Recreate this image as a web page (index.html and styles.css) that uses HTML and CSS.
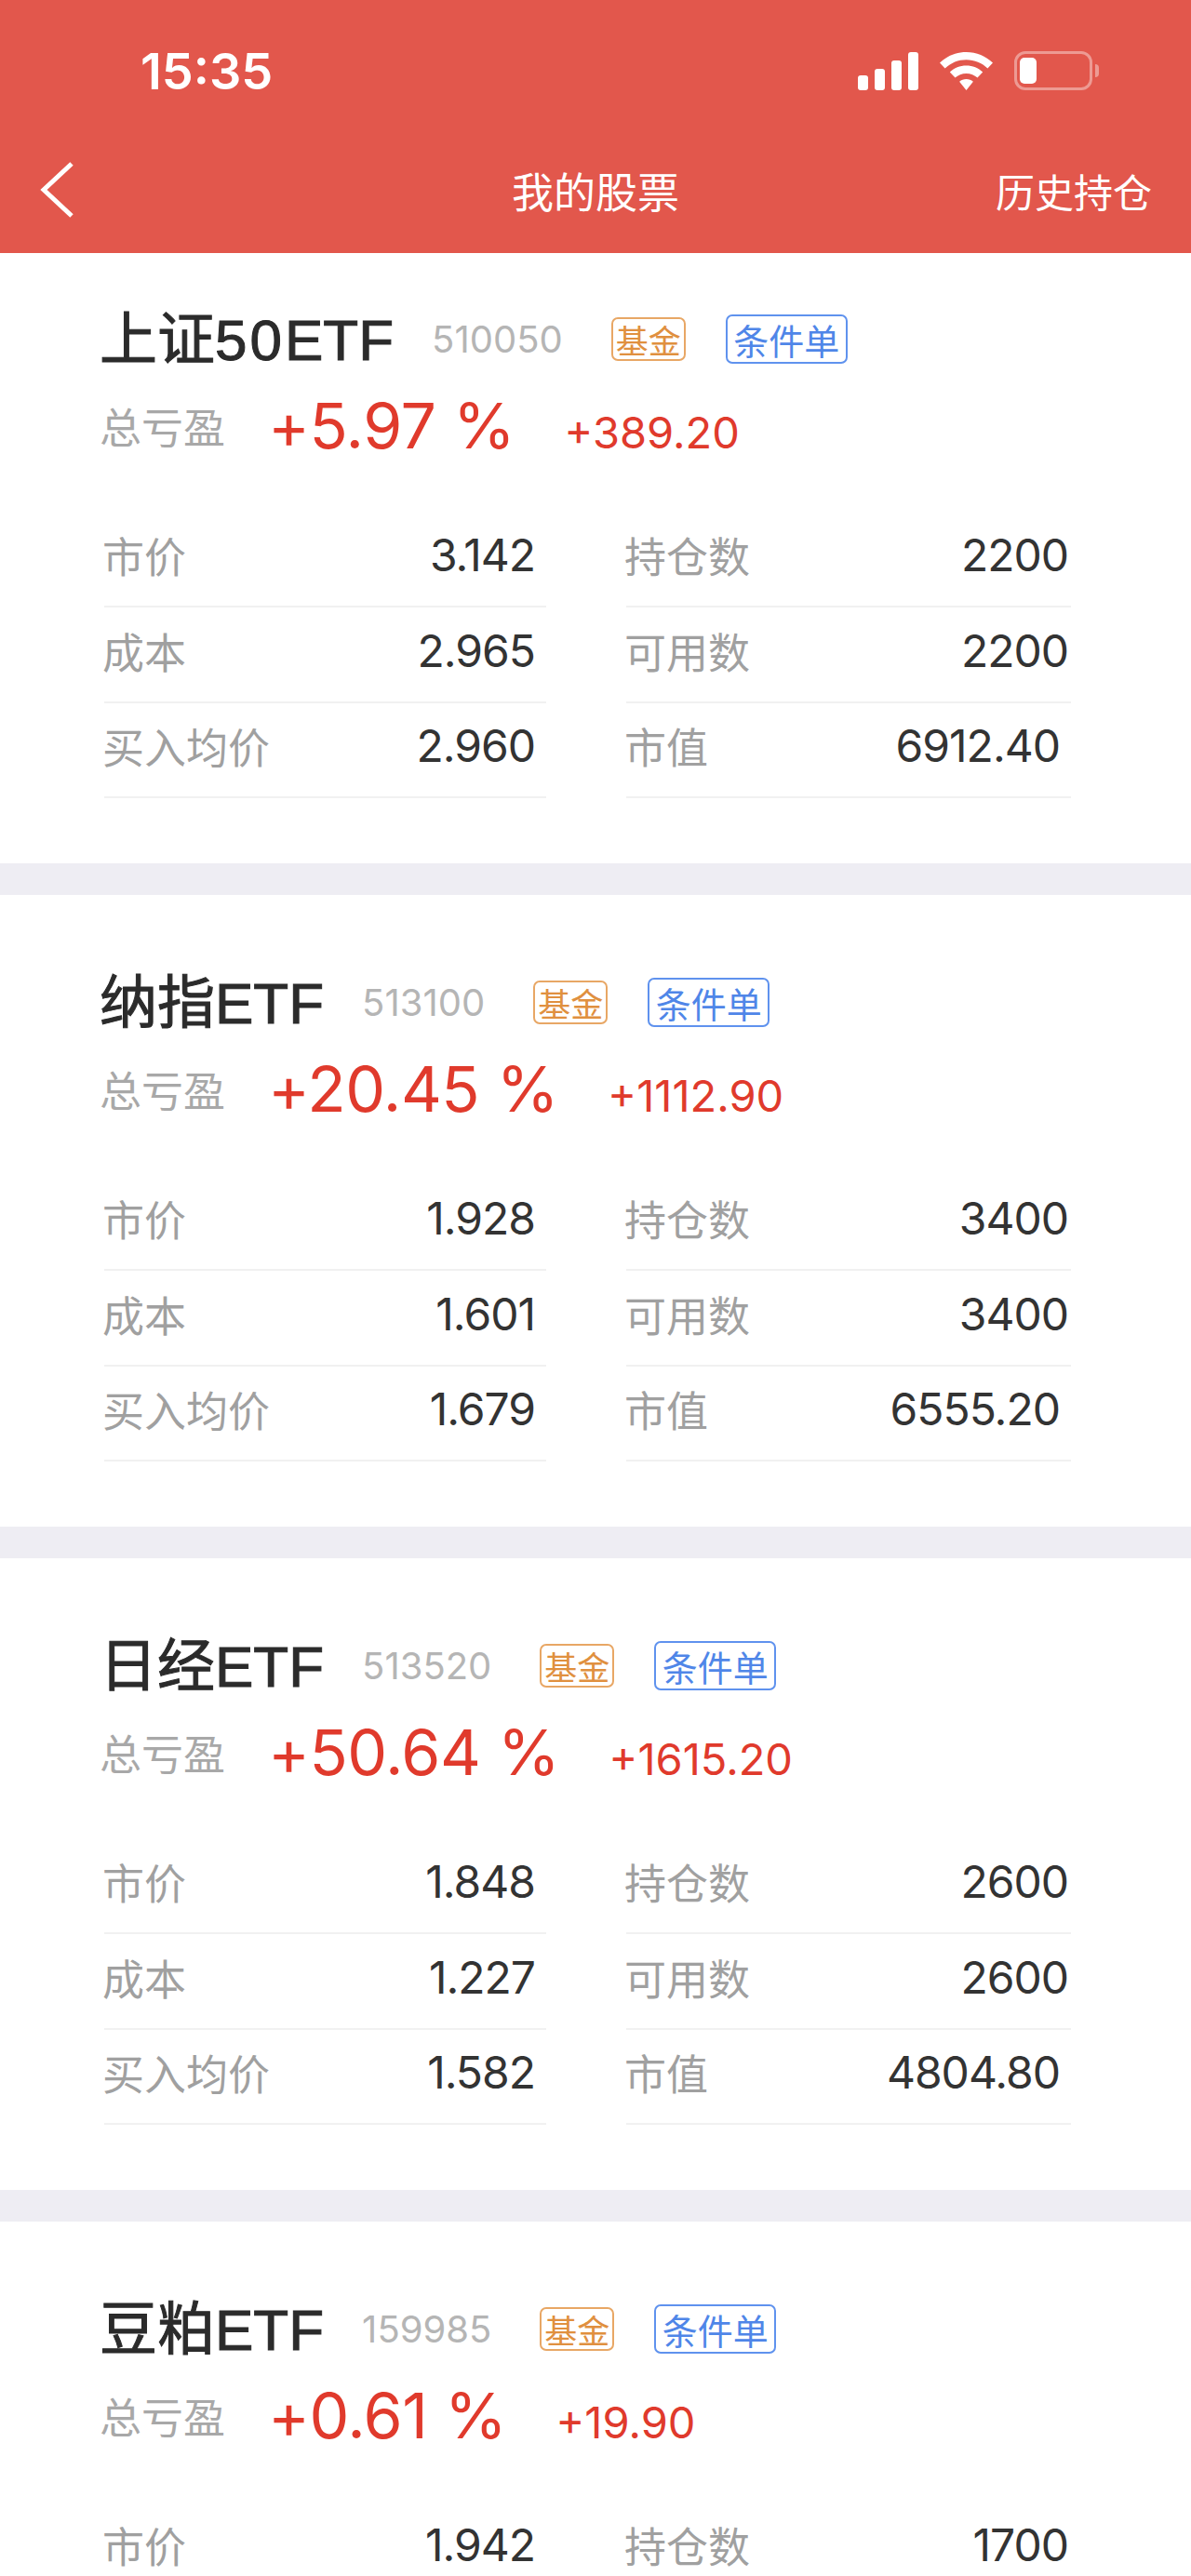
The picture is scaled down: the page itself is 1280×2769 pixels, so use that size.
FILE: index.html
```html
<!DOCTYPE html>
<html lang="zh-CN">
<head>
    <meta charset="UTF-8">
    <meta name="viewport" content="width=device-width, initial-scale=1.0">
    <title>我的股票</title>
    <link rel="stylesheet" href="styles.css">
</head>
<body>
<div class="page">
    <header class="top">
        <div class="status-bar">
            <span class="clock">15:35</span>
            <div class="status-icons">
                <svg class="signal" width="65" height="41" viewBox="0 0 65 41" fill="#fff">
                    <rect x="0" y="25" width="11" height="16" rx="3"/>
                    <rect x="18" y="18" width="11" height="23" rx="3"/>
                    <rect x="36" y="9" width="11" height="32" rx="3"/>
                    <rect x="54" y="0" width="11" height="41" rx="3"/>
                </svg>
                <svg class="wifi" width="57" height="41" viewBox="0 0 57 41" fill="#fff">
                    <path d="M28.5 0C17.5 0 7.6 4.300 0 11.500L5.600 17.500C11.600 11.800 19.600 8.300 28.500 8.300C37.400 8.300 45.400 11.800 51.400 17.500L57 11.500C49.400 4.300 39.500 0 28.500 0Z"/>
                    <path d="M28.500 14.500C21.700 14.500 15.500 17.100 10.800 21.500L16.500 27.600C19.700 24.700 23.900 22.900 28.500 22.900C33.100 22.900 37.300 24.700 40.500 27.600L46.200 21.500C41.500 17.100 35.300 14.500 28.500 14.500Z"/>
                    <path d="M28.500 29C25.700 29 23.100 30 21.100 31.800L28.500 41L35.900 31.800C33.900 30 31.300 29 28.500 29Z"/>
                </svg>
                <div class="battery">
                    <div class="battery-body"><div class="battery-level"></div></div>
                    <div class="battery-cap"></div>
                </div>
            </div>
        </div>
        <nav class="nav-bar">
            <svg class="back" width="38" height="60" viewBox="0 0 38 60" fill="none" stroke="#fff" stroke-width="5">
                <path d="M35 2L5 30L35 58"/>
            </svg>
            <h1 class="nav-title">我的股票</h1>
            <a class="nav-link">历史持仓</a>
        </nav>
    </header>

    <main class="list">
        <section class="card">
            <div class="card-head">
                <h2 class="name">上证<span class="name-num">50</span>ETF</h2>
                <span class="code">510050</span>
                <span class="tag tag-fund">基金</span>
                <span class="tag tag-order">条件单</span>
            </div>
            <div class="profit">
                <span class="profit-label">总亏盈</span>
                <span class="profit-pct">+5.97 %</span>
                <span class="profit-amount">+389.20</span>
            </div>
            <div class="stats">
                <div class="stat"><span class="stat-label">市价</span><span class="stat-value">3.142</span></div>
                <div class="stat stat-right"><span class="stat-label">持仓数</span><span class="stat-value">2200</span></div>
                <div class="stat"><span class="stat-label">成本</span><span class="stat-value">2.965</span></div>
                <div class="stat stat-right"><span class="stat-label">可用数</span><span class="stat-value">2200</span></div>
                <div class="stat"><span class="stat-label">买入均价</span><span class="stat-value">2.960</span></div>
                <div class="stat"><span class="stat-label">市值</span><span class="stat-value">6912.40</span></div>
            </div>
        </section>

        <section class="card">
            <div class="card-head">
                <h2 class="name">纳指ETF</h2>
                <span class="code">513100</span>
                <span class="tag tag-fund">基金</span>
                <span class="tag tag-order">条件单</span>
            </div>
            <div class="profit">
                <span class="profit-label">总亏盈</span>
                <span class="profit-pct">+20.45 %</span>
                <span class="profit-amount">+1112.90</span>
            </div>
            <div class="stats">
                <div class="stat"><span class="stat-label">市价</span><span class="stat-value">1.928</span></div>
                <div class="stat stat-right"><span class="stat-label">持仓数</span><span class="stat-value">3400</span></div>
                <div class="stat"><span class="stat-label">成本</span><span class="stat-value">1.601</span></div>
                <div class="stat stat-right"><span class="stat-label">可用数</span><span class="stat-value">3400</span></div>
                <div class="stat"><span class="stat-label">买入均价</span><span class="stat-value">1.679</span></div>
                <div class="stat"><span class="stat-label">市值</span><span class="stat-value">6555.20</span></div>
            </div>
        </section>

        <section class="card">
            <div class="card-head">
                <h2 class="name">日经ETF</h2>
                <span class="code">513520</span>
                <span class="tag tag-fund">基金</span>
                <span class="tag tag-order">条件单</span>
            </div>
            <div class="profit">
                <span class="profit-label">总亏盈</span>
                <span class="profit-pct">+50.64 %</span>
                <span class="profit-amount">+1615.20</span>
            </div>
            <div class="stats">
                <div class="stat"><span class="stat-label">市价</span><span class="stat-value">1.848</span></div>
                <div class="stat stat-right"><span class="stat-label">持仓数</span><span class="stat-value">2600</span></div>
                <div class="stat"><span class="stat-label">成本</span><span class="stat-value">1.227</span></div>
                <div class="stat stat-right"><span class="stat-label">可用数</span><span class="stat-value">2600</span></div>
                <div class="stat"><span class="stat-label">买入均价</span><span class="stat-value">1.582</span></div>
                <div class="stat"><span class="stat-label">市值</span><span class="stat-value">4804.80</span></div>
            </div>
        </section>

        <section class="card">
            <div class="card-head">
                <h2 class="name">豆粕ETF</h2>
                <span class="code">159985</span>
                <span class="tag tag-fund">基金</span>
                <span class="tag tag-order">条件单</span>
            </div>
            <div class="profit">
                <span class="profit-label">总亏盈</span>
                <span class="profit-pct">+0.61 %</span>
                <span class="profit-amount">+19.90</span>
            </div>
            <div class="stats">
                <div class="stat"><span class="stat-label">市价</span><span class="stat-value">1.942</span></div>
                <div class="stat stat-right"><span class="stat-label">持仓数</span><span class="stat-value">1700</span></div>
            </div>
        </section>
    </main>
</div>
</body>
</html>
```

FILE: styles.css
```css
* {
    box-sizing: border-box;
}

html, body {
    margin: 0;
    padding: 0;
}

body {
    font-family: "Liberation Sans", "Noto Sans CJK SC", sans-serif;
    color: #333;
    background-color: #fff;
}

.page {
    height: 100vh;
    overflow: hidden;
}

.top {
    position: relative;
    z-index: 1;
    height: 272px;
    background-color: #e2574c;
    color: #fff;
}

.status-bar {
    display: flex;
    justify-content: space-between;
    align-items: center;
    height: 152px;
    padding: 0 106px 0 151px;
}

.clock {
    font-family: Inter, sans-serif;
    font-size: 54px;
    font-weight: 600;
}

.status-icons {
    display: flex;
    align-items: center;
    gap: 23px;
}

.battery {
    display: flex;
    align-items: center;
    gap: 3px;
    margin-right: -7px;
}

.battery-body {
    width: 84px;
    height: 42px;
    padding: 4px 3px;
    border: 3px solid rgba(255, 255, 255, 0.4);
    border-radius: 12px;
}

.battery-level {
    width: 18px;
    height: 100%;
    background-color: #fff;
    border-radius: 5px;
}

.battery-cap {
    width: 4px;
    height: 14px;
    background-color: rgba(255, 255, 255, 0.4);
    border-radius: 0 4px 4px 0;
}

.nav-bar {
    display: flex;
    align-items: center;
    justify-content: space-between;
    height: 110px;
    padding: 0 42px 6px 42px;
    position: relative;
}

.nav-title {
    position: absolute;
    left: 0;
    right: 0;
    margin: 0;
    text-align: center;
    font-size: 45px;
    font-weight: 400;
}

.nav-link {
    font-size: 42px;
}

.list {
    display: flex;
    flex-direction: column;
    gap: 34px;
    margin-top: -23px;
    background-color: #eeedf3;
}

.card {
    height: 679px;
    padding-top: 88px;
    background-color: #fff;
}

.card-head {
    display: flex;
    align-items: center;
    height: 54px;
    padding-left: 107px;
}

.name {
    margin: 0 41px 0 0;
    padding-bottom: 8px;
    font-size: 62px;
    font-weight: 400;
    color: #2b2b2b;
    -webkit-text-stroke: 1px #2b2b2b;
}

.name-num {
    letter-spacing: 3px;
}

.code {
    margin-right: 52px;
    font-family: Inter, sans-serif;
    font-size: 40px;
    color: #b5b5b5;
}

.tag {
    display: flex;
    align-items: center;
    justify-content: center;
    border: 2px solid;
    border-radius: 7px;
}

.tag-fund {
    width: 80px;
    height: 47px;
    margin-right: 43px;
    font-size: 35px;
    color: #e0903f;
    border-color: #e8a765;
}

.tag-order {
    width: 131px;
    height: 53px;
    font-size: 38px;
    color: #4f86e8;
    border-color: #5f92ee;
}

.profit {
    display: flex;
    align-items: flex-end;
    height: 100px;
    padding-left: 107px;
}

.profit-label {
    width: 181px;
    margin-bottom: 7px;
    font-size: 45px;
    line-height: 1;
    color: #a8a8a8;
}

.profit-pct {
    margin-right: 53px;
    font-family: Inter, sans-serif;
    font-size: 68px;
    line-height: 1;
    letter-spacing: -0.500px;
    color: #e03a2c;
}

.profit-amount {
    margin-bottom: 3px;
    font-family: Inter, sans-serif;
    font-size: 47px;
    line-height: 1;
    color: #e03a2c;
}

.stats {
    display: grid;
    grid-template-columns: 475px 478px;
    column-gap: 86px;
    margin-top: 59.500px;
    padding-left: 112px;
}

.stat {
    display: flex;
    align-items: center;
    justify-content: space-between;
    height: 102.500px;
    padding-right: 12px;
    padding-bottom: 8px;
    border-bottom: 2px solid #f1f1f1;
}

.stat-right {
    padding-right: 3px;
}

.stat-label {
    margin-left: -2px;
    font-size: 45px;
    color: #a0a0a0;
}

.stat-value {
    font-family: Inter, sans-serif;
    font-size: 48px;
    letter-spacing: -1px;
    color: #333;
}
```
